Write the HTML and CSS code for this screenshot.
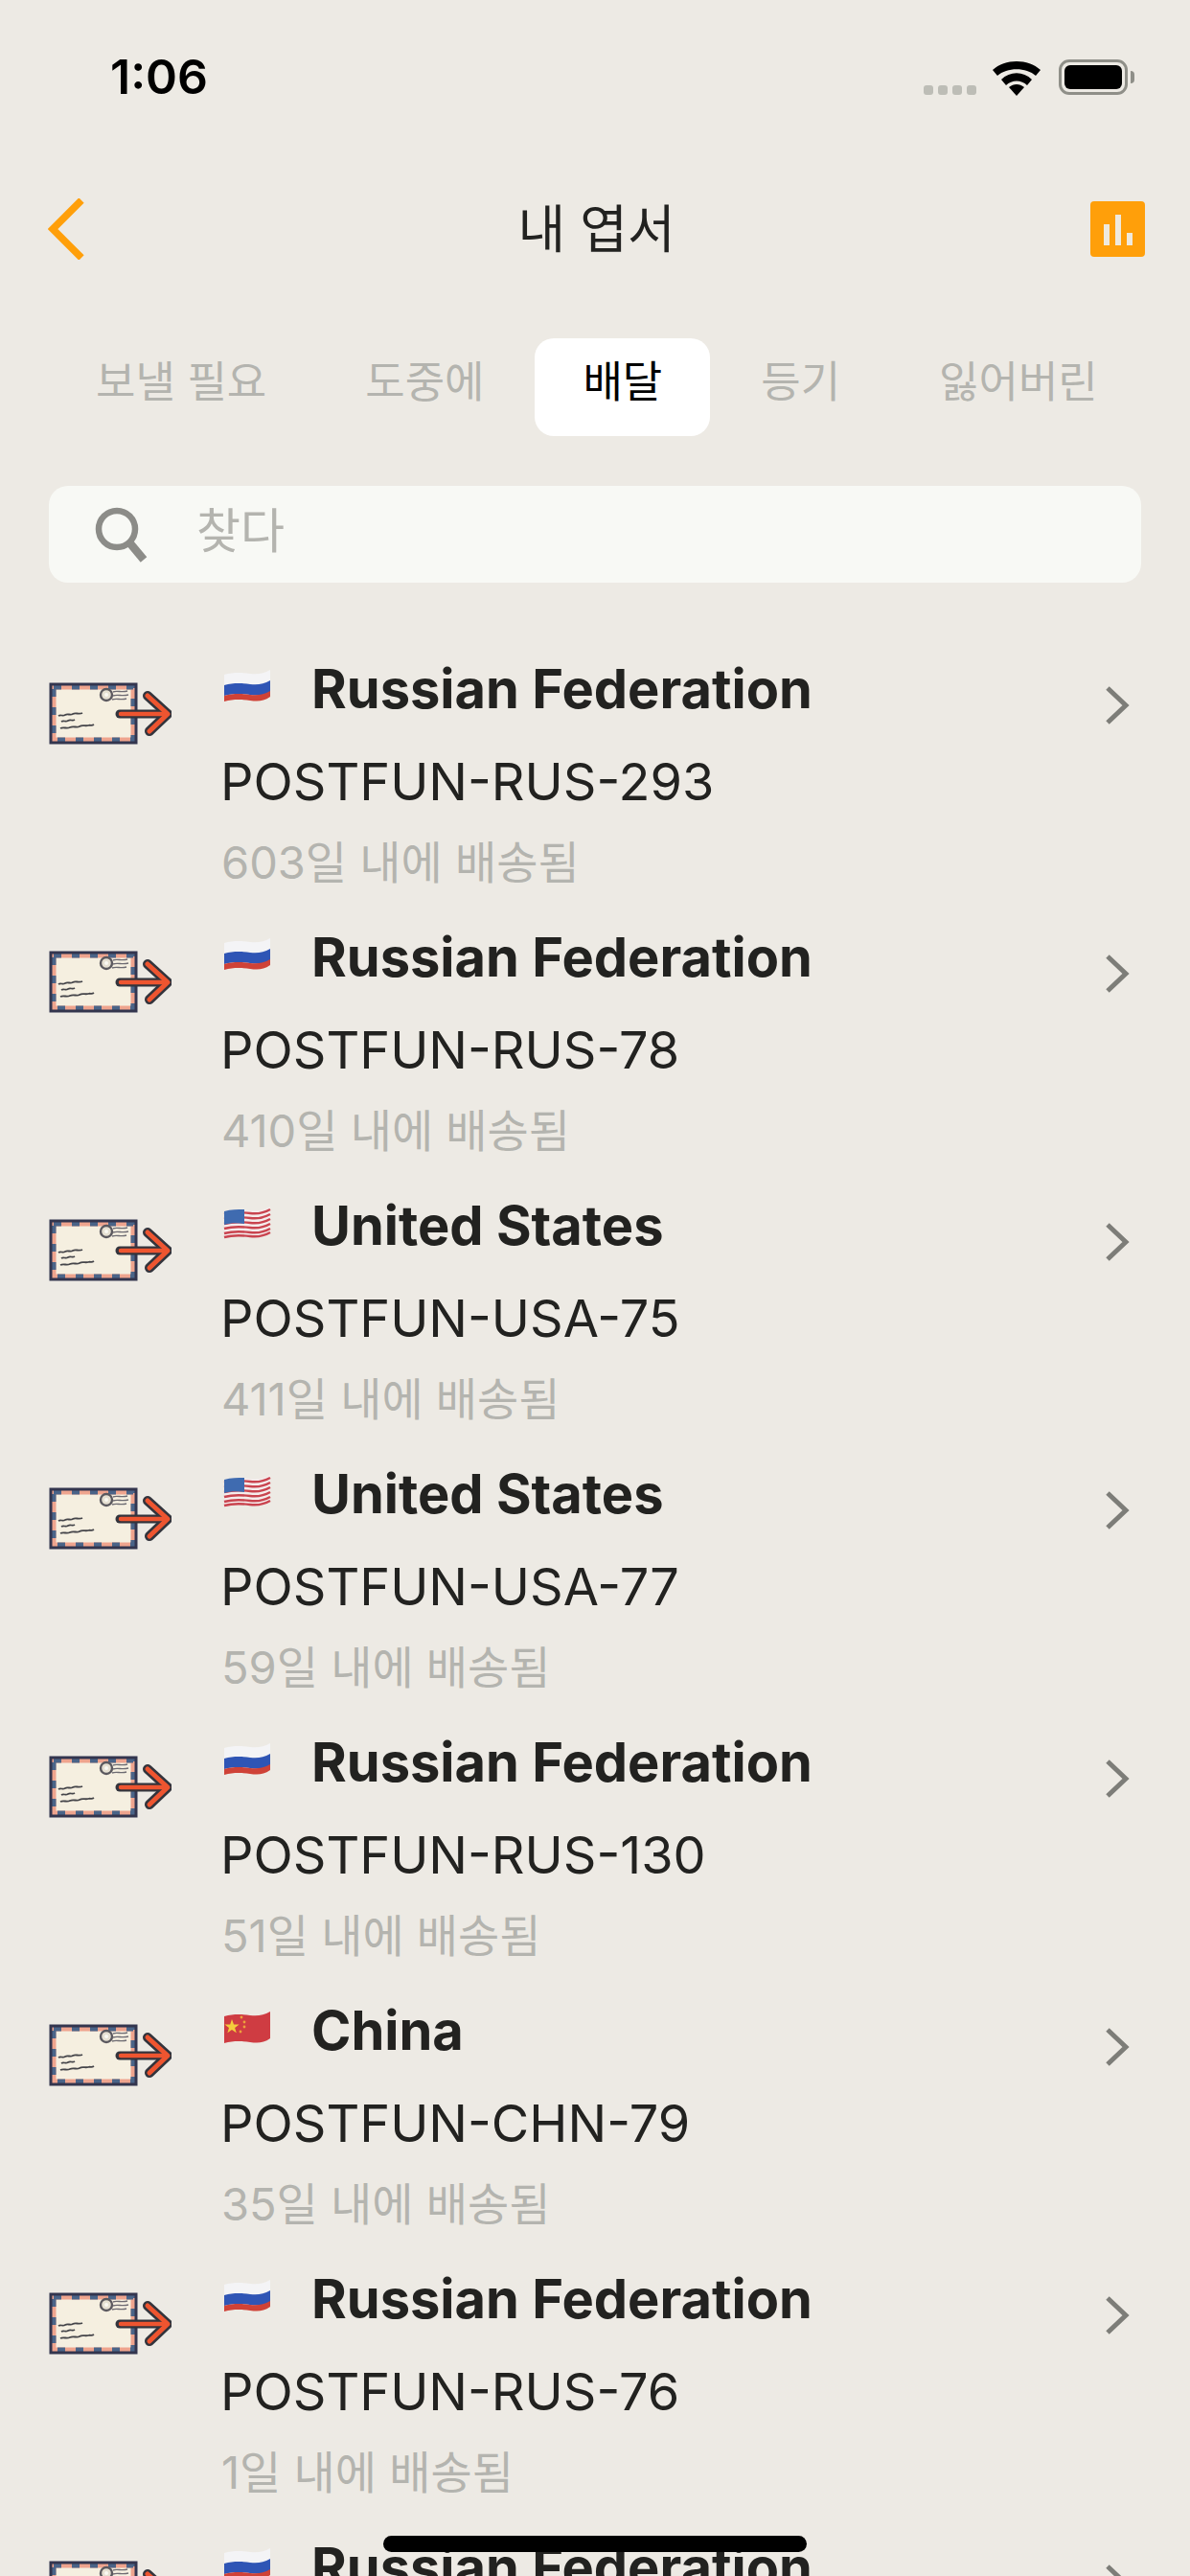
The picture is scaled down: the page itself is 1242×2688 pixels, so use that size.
FILE: index.html
```html
<!DOCTYPE html>
<html lang="ko">
<head>
    <meta charset="UTF-8">
    <meta name="viewport" content="width=device-width, initial-scale=1.0">
    <title>내 엽서</title>
    <link rel="stylesheet" href="styles.css">
</head>
<body>
    <svg class="defs" width="0" height="0">
        <defs>
            <symbol id="envelope" viewBox="0 0 128 66">
                <rect x="1" y="1" width="91" height="63" fill="#f5efe0"/>
                <rect x="5" y="5" width="83" height="55" fill="none" stroke="#eea48e" stroke-width="5"/>
                <rect x="5" y="5" width="83" height="55" fill="none" stroke="#4a6488" stroke-width="5" stroke-dasharray="8 11"/>
                <rect x="2" y="2" width="89" height="61" fill="none" stroke="#33354e" stroke-width="3"/>
                <circle cx="60" cy="13" r="6" fill="#e6e0d2" stroke="#5b595f" stroke-width="2.4"/>
                <circle cx="60" cy="13" r="2" fill="#faf8f2"/>
                <path d="M67 10c4-2 9 1 15-1M67 14c5-2 9 1 16-1M66 18c5-2 9 1 15-1" stroke="#6d6b72" stroke-width="1.4" fill="none"/>
                <path d="M10 35c3-2 4 1 7-1s5 1 8-1 6 1 10-1M13 41c3-2 4 1 7-1s4 1 7-1M12 48c4-2 6 1 10-1s7 1 10-1 6 0 9-1 3 1 6-1" stroke="#45454a" stroke-width="1.8" fill="none"/>
                <path d="M74 33h46" stroke="#33343c" stroke-width="9" stroke-linecap="round" fill="none"/>
                <path d="M103 14l21 19-19 18" stroke="#33343c" stroke-width="10" stroke-linecap="round" stroke-linejoin="round" fill="none"/>
                <path d="M75 33h44" stroke="#ee5530" stroke-width="4.5" stroke-linecap="round" fill="none"/>
                <path d="M103 14l21 19-19 18" stroke="#ee5530" stroke-width="5" stroke-linecap="round" stroke-linejoin="round" fill="none"/>
            </symbol>
            <symbol id="flag-ru" viewBox="0 0 50 36">
                <path d="M1 6C12 3 20 4 28 5S42 5 49 1V13C42 17 36 17 28 16S12 14 1 17Z" fill="#f4f4f6"/>
                <path d="M1 17C12 14 20 15 28 16S42 16 49 12V24C42 28 36 28 28 27S12 25 1 28Z" fill="#2f55b5"/>
                <path d="M1 28C12 25 20 26 28 27S42 27 49 23V29C42 34 36 34 28 33S12 31 1 34Z" fill="#cf4237"/>
            </symbol>
            <symbol id="flag-us" viewBox="0 0 50 36">
                <path d="M1 6C12 3 20 4 28 5S42 5 49 1V29C42 34 36 34 28 33S12 31 1 34Z" fill="#f5ecec"/>
                <path d="M1 9C12 6 20 7 28 8S42 8 49 4M1 14C12 11 20 12 28 13S42 13 49 9M1 19C12 16 20 17 28 18S42 18 49 14M1 24C12 21 20 22 28 23S42 23 49 19M1 29C12 26 20 27 28 28S42 28 49 24M1 33C12 30 20 31 28 32S42 32 49 28" fill="none" stroke="#c9444f" stroke-width="2.4"/>
                <path d="M1 6C8 4 15 4 22 4V19C14 18 8 18 1 20Z" fill="#3f6bb0"/>
            </symbol>
            <symbol id="flag-cn" viewBox="0 0 50 36">
                <path d="M1 6C12 3 20 4 28 5S42 5 49 1V29C42 34 36 34 28 33S12 31 1 34Z" fill="#cf3c42"/>
                <path d="M9 9l2 5.4 5.6.1-4.5 3.4 1.7 5.4-4.8-3.2-4.6 3.2 1.6-5.4-4.5-3.4 5.7-.1Z" fill="#f4cc3c"/>
                <circle cx="19" cy="7" r="1.4" fill="#eda23c"/>
                <circle cx="22" cy="12" r="1.4" fill="#eda23c"/>
                <circle cx="22" cy="17" r="1.4" fill="#eda23c"/>
                <circle cx="18" cy="22" r="1.4" fill="#eda23c"/>
            </symbol>
            <symbol id="chevron" viewBox="0 0 28 44">
                <path d="M4 4l19 18-19 18" fill="none" stroke="#7d7d78" stroke-width="5"/>
            </symbol>
        </defs>
    </svg>

    <div class="screen">
        <div class="status-bar">
            <span class="time">1:06</span>
            <div class="status-icons">
                <div class="signal"><i></i><i></i><i></i><i></i></div>
                <svg class="wifi" viewBox="0 0 52 40">
                    <path d="M1 13C14 1 38 1 51 13L46 19C36 10 16 10 6 19Z"/>
                    <path d="M10 23C19 14 33 14 42 23L37 29C31 23 21 23 15 29Z"/>
                    <path d="M18 31C23 27 29 27 34 31L26 40Z"/>
                </svg>
                <div class="battery"><div class="battery-fill"></div></div>
                <div class="battery-nub"></div>
            </div>
        </div>

        <div class="nav-bar">
            <svg class="back" viewBox="0 0 38 64">
                <path d="M35 2L5 32l30 30" fill="none" stroke="#ff9f0a" stroke-width="7.5"/>
            </svg>
            <h1 class="title">내 엽서</h1>
            <div class="stats-btn"><i class="b1"></i><i class="b2"></i><i class="b3"></i></div>
        </div>

        <div class="tabs">
            <div class="tab">보낼 필요</div>
            <div class="tab">도중에</div>
            <div class="tab active">배달</div>
            <div class="tab">등기</div>
            <div class="tab">잃어버린</div>
        </div>

        <div class="search">
            <svg class="search-icon" viewBox="0 0 56 58">
                <circle cx="23" cy="23" r="19" fill="none" stroke="#8c8c88" stroke-width="6.5"/>
                <path d="M36 37l15 18" stroke="#8c8c88" stroke-width="8.5" fill="none"/>
            </svg>
            <span class="search-text">찾다</span>
        </div>

        <div class="list">
            <div class="row">
                <svg class="envelope"><use href="#envelope"/></svg>
                <div class="info">
                    <div class="country"><svg class="flag"><use href="#flag-ru"/></svg><span class="name">Russian Federation</span></div>
                    <div class="code">POSTFUN-RUS-293</div>
                    <div class="date">603일 내에 배송됨</div>
                </div>
                <svg class="chevron"><use href="#chevron"/></svg>
            </div>
            <div class="row">
                <svg class="envelope"><use href="#envelope"/></svg>
                <div class="info">
                    <div class="country"><svg class="flag"><use href="#flag-ru"/></svg><span class="name">Russian Federation</span></div>
                    <div class="code">POSTFUN-RUS-78</div>
                    <div class="date">410일 내에 배송됨</div>
                </div>
                <svg class="chevron"><use href="#chevron"/></svg>
            </div>
            <div class="row">
                <svg class="envelope"><use href="#envelope"/></svg>
                <div class="info">
                    <div class="country"><svg class="flag"><use href="#flag-us"/></svg><span class="name">United States</span></div>
                    <div class="code">POSTFUN-USA-75</div>
                    <div class="date">411일 내에 배송됨</div>
                </div>
                <svg class="chevron"><use href="#chevron"/></svg>
            </div>
            <div class="row">
                <svg class="envelope"><use href="#envelope"/></svg>
                <div class="info">
                    <div class="country"><svg class="flag"><use href="#flag-us"/></svg><span class="name">United States</span></div>
                    <div class="code">POSTFUN-USA-77</div>
                    <div class="date">59일 내에 배송됨</div>
                </div>
                <svg class="chevron"><use href="#chevron"/></svg>
            </div>
            <div class="row">
                <svg class="envelope"><use href="#envelope"/></svg>
                <div class="info">
                    <div class="country"><svg class="flag"><use href="#flag-ru"/></svg><span class="name">Russian Federation</span></div>
                    <div class="code">POSTFUN-RUS-130</div>
                    <div class="date">51일 내에 배송됨</div>
                </div>
                <svg class="chevron"><use href="#chevron"/></svg>
            </div>
            <div class="row">
                <svg class="envelope"><use href="#envelope"/></svg>
                <div class="info">
                    <div class="country"><svg class="flag"><use href="#flag-cn"/></svg><span class="name">China</span></div>
                    <div class="code">POSTFUN-CHN-79</div>
                    <div class="date">35일 내에 배송됨</div>
                </div>
                <svg class="chevron"><use href="#chevron"/></svg>
            </div>
            <div class="row">
                <svg class="envelope"><use href="#envelope"/></svg>
                <div class="info">
                    <div class="country"><svg class="flag"><use href="#flag-ru"/></svg><span class="name">Russian Federation</span></div>
                    <div class="code">POSTFUN-RUS-76</div>
                    <div class="date">1일 내에 배송됨</div>
                </div>
                <svg class="chevron"><use href="#chevron"/></svg>
            </div>
            <div class="row">
                <svg class="envelope"><use href="#envelope"/></svg>
                <div class="info">
                    <div class="country"><svg class="flag"><use href="#flag-ru"/></svg><span class="name">Russian Federation</span></div>
                </div>
                <svg class="chevron"><use href="#chevron"/></svg>
            </div>
        </div>

        <div class="home-indicator"></div>
    </div>
</body>
</html>
```

FILE: styles.css
```css
html, body {
    margin: 0;
    padding: 0;
}
body {
    font-family: Inter, "Noto Sans CJK KR", sans-serif;
    background-color: #edeae4;
    color: #222220;
}
.defs {
    display: block;
    height: 0;
}
.screen {
    position: relative;
    width: 1242px;
    height: 2688px;
    overflow: hidden;
}

/* status bar */
.status-bar {
    height: 158px;
    display: flex;
    align-items: center;
    justify-content: space-between;
    padding: 2px 58px 0 115px;
    box-sizing: border-box;
}
.time {
    font-size: 50px;
    font-weight: 600;
    color: #000;
}
.status-icons {
    display: flex;
    align-items: center;
}
.signal {
    display: flex;
    gap: 5px;
    margin: 28px 16px 0 0;
}
.signal i {
    width: 10px;
    height: 10px;
    border-radius: 3px;
    background-color: #bdbdb6;
}
.wifi {
    width: 52px;
    height: 40px;
    margin-right: 18px;
}
.battery {
    width: 72px;
    height: 37px;
    box-sizing: border-box;
    border: 3px solid #8f8f88;
    border-radius: 11px;
    padding: 3px;
}
.battery-fill {
    height: 100%;
    border-radius: 6px;
    background-color: #000;
}
.battery-nub {
    width: 4px;
    height: 13px;
    margin-left: 3px;
    border-radius: 0 4px 4px 0;
    background-color: #8f8f88;
}

/* nav bar */
.nav-bar {
    height: 162px;
    display: grid;
    grid-template-columns: 1fr auto 1fr;
    align-items: center;
    padding: 0 47px 0 50px;
}
.back {
    width: 38px;
    height: 64px;
}
.title {
    margin: 0 0 8px;
    font-size: 54px;
    font-weight: 400;
    color: #222220;
}
.stats-btn {
    justify-self: end;
    width: 57px;
    height: 58px;
    box-sizing: border-box;
    padding-bottom: 12px;
    border-radius: 4px;
    background-color: #ff9f0a;
    display: flex;
    align-items: flex-end;
    justify-content: center;
    gap: 6px;
}
.stats-btn i {
    width: 6px;
    background-color: #efe9dd;
}
.stats-btn .b1 { height: 22px; }
.stats-btn .b2 { height: 32px; }
.stats-btn .b3 { height: 13px; }

/* tabs */
.tabs {
    display: flex;
    gap: 3px;
    margin: 33px 0 0 50px;
}
.tab {
    height: 102px;
    line-height: 91px;
    padding: 0 50px;
    border-radius: 20px;
    font-size: 45px;
    color: #b4b4af;
    white-space: nowrap;
}
.tab.active {
    background-color: #fff;
    color: #000;
}

/* search */
.search {
    height: 101px;
    margin: 52px 51px 0;
    border-radius: 20px;
    background-color: #f8f9f5;
    display: flex;
    align-items: center;
    padding-left: 48px;
}
.search-icon {
    width: 56px;
    height: 58px;
}
.search-text {
    margin: 0 0 16px 50px;
    font-size: 50px;
    color: #b4b4af;
}

/* list */
.list {
    margin-top: 64px;
}
.row {
    height: 280px;
    display: flex;
    padding-left: 51px;
}
.envelope {
    width: 128px;
    height: 66px;
    margin-top: 40px;
    flex-shrink: 0;
}
.info {
    width: 922px;
    margin-left: 52px;
}
.country {
    height: 94px;
    display: flex;
    align-items: center;
}
.flag {
    width: 50px;
    height: 36px;
    margin: 0 42px 6px 2px;
}
.name {
    font-size: 56px;
    font-weight: 700;
}
.code {
    height: 100px;
    line-height: 100px;
    font-size: 54px;
    margin-left: -1px;
}
.date {
    line-height: 68px;
    font-size: 47px;
    color: #b4b4af;
}
.chevron {
    width: 28px;
    height: 44px;
    margin: 42px 0 0 -1px;
}

.home-indicator {
    position: absolute;
    left: 400px;
    top: 2646px;
    width: 442px;
    height: 17px;
    border-radius: 9px;
    background-color: #000;
}
```
